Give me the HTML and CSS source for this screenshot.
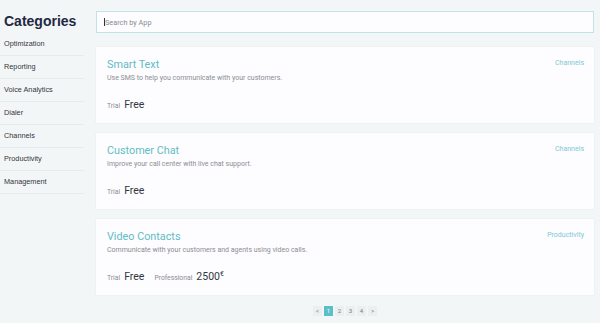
FILE: index.html
```html
<!DOCTYPE html>
<html>
<head>
<meta charset="utf-8">
<link rel="stylesheet" href="styles.css">
</head>
<body>
<div class="page">
  <aside class="sidebar">
    <h1 class="heading">Categories</h1>
    <ul class="cats">
      <li class="cat">Optimization</li>
      <li class="cat">Reporting</li>
      <li class="cat">Voice Analytics</li>
      <li class="cat">Dialer</li>
      <li class="cat">Channels</li>
      <li class="cat">Productivity</li>
      <li class="cat">Management</li>
    </ul>
  </aside>
  <main class="main">
    <div class="search"><span class="caret"></span><span class="placeholder">Search by App</span></div>
    <div class="card">
      <div class="card-top">
        <div>
          <div class="title">Smart Text</div>
          <div class="desc">Use SMS to help you communicate with your customers.</div>
        </div>
        <div class="tag">Channels</div>
      </div>
      <div class="prices">
        <span class="plan">Trial</span><span class="price">Free</span>
      </div>
    </div>
    <div class="card">
      <div class="card-top">
        <div>
          <div class="title">Customer Chat</div>
          <div class="desc">Improve your call center with live chat support.</div>
        </div>
        <div class="tag">Channels</div>
      </div>
      <div class="prices">
        <span class="plan">Trial</span><span class="price">Free</span>
      </div>
    </div>
    <div class="card">
      <div class="card-top">
        <div>
          <div class="title">Video Contacts</div>
          <div class="desc">Communicate with your customers and agents using video calls.</div>
        </div>
        <div class="tag">Productivity</div>
      </div>
      <div class="prices">
        <span class="plan">Trial</span><span class="price">Free</span>
        <span class="plan plan-gap">Professional</span><span class="price">2500<sup class="cur">€</sup></span>
      </div>
    </div>
    <nav class="pager">
      <span class="pg">&lt;</span>
      <span class="pg active">1</span>
      <span class="pg">2</span>
      <span class="pg">3</span>
      <span class="pg">4</span>
      <span class="pg">&gt;</span>
    </nav>
  </main>
</div>
</body>
</html>
```
FILE: styles.css
```css
* { box-sizing: border-box; }
html, body { margin: 0; padding: 0; }
body {
  background: #f3f6f7;
  font-family: Roboto, "Liberation Sans", Arial, sans-serif;
  width: 600px;
  height: 323px;
  overflow: hidden;
}
.page {
  display: flex;
  height: 323px;
}
.sidebar {
  width: 84px;
  flex: none;
}
.heading {
  margin: 0;
  padding: 12px 0 0 4px;
  height: 33px;
  font-family: "Liberation Sans", Arial, sans-serif;
  font-weight: bold;
  font-size: 14px;
  line-height: 18px;
  color: #1f2843;
}
.cats {
  list-style: none;
  margin: 0;
  padding: 0;
}
.cat {
  height: 23px;
  line-height: 22px;
  padding-left: 4px;
  font-family: "Liberation Sans", Arial, sans-serif;
  font-size: 7.3px;
  color: #33363b;
  border-bottom: 1px solid #e6ebec;
}
.main {
  flex: 1;
  padding: 11px 6px 0 12px;
  display: flex;
  flex-direction: column;
}
.search {
  height: 22px;
  background: #fdfcfe;
  border: 1px solid #c4e2e5;
  display: flex;
  align-items: center;
  padding-left: 7px;
  margin-bottom: 14px;
}
.caret {
  width: 1px;
  height: 8px;
  background: #333;
}
.placeholder {
  font-size: 7.3px;
  color: #8a8d91;
}
.card {
  height: 76px;
  background: #fdfcff;
  margin-bottom: 10px;
  padding: 11px 10px 0 11px;
  box-shadow: 0 0 1px rgba(200, 210, 215, 0.6);
  display: flex;
  flex-direction: column;
}
.card-top {
  display: flex;
  justify-content: space-between;
  align-items: flex-start;
}
.title {
  font-size: 10.8px;
  line-height: 14px;
  color: #62bcc3;
  font-weight: 400;
}
.desc {
  margin-top: 2px;
  font-size: 7px;
  line-height: 9px;
  color: #8b8e92;
}
.tag {
  font-size: 7px;
  line-height: 10px;
  color: #7ccbd0;
}
.prices {
  margin-top: 15px;
  display: flex;
  align-items: baseline;
}
.plan {
  font-size: 6.8px;
  color: #8b8e92;
  margin-right: 4px;
}
.plan-gap {
  margin-left: 10px;
}
.price {
  font-size: 10.5px;
  color: #333840;
}
.cur {
  font-size: 7px;
  vertical-align: 4px;
  line-height: 0;
}
.pager {
  display: flex;
  justify-content: center;
  gap: 2px;
  margin-top: 1px;
}
.pg {
  width: 9px;
  height: 10px;
  background: #eceff0;
  font-size: 6px;
  line-height: 10px;
  text-align: center;
  color: #777a7e;
}
.pg.active {
  background: #5bbfc9;
  color: #ffffff;
}
```
